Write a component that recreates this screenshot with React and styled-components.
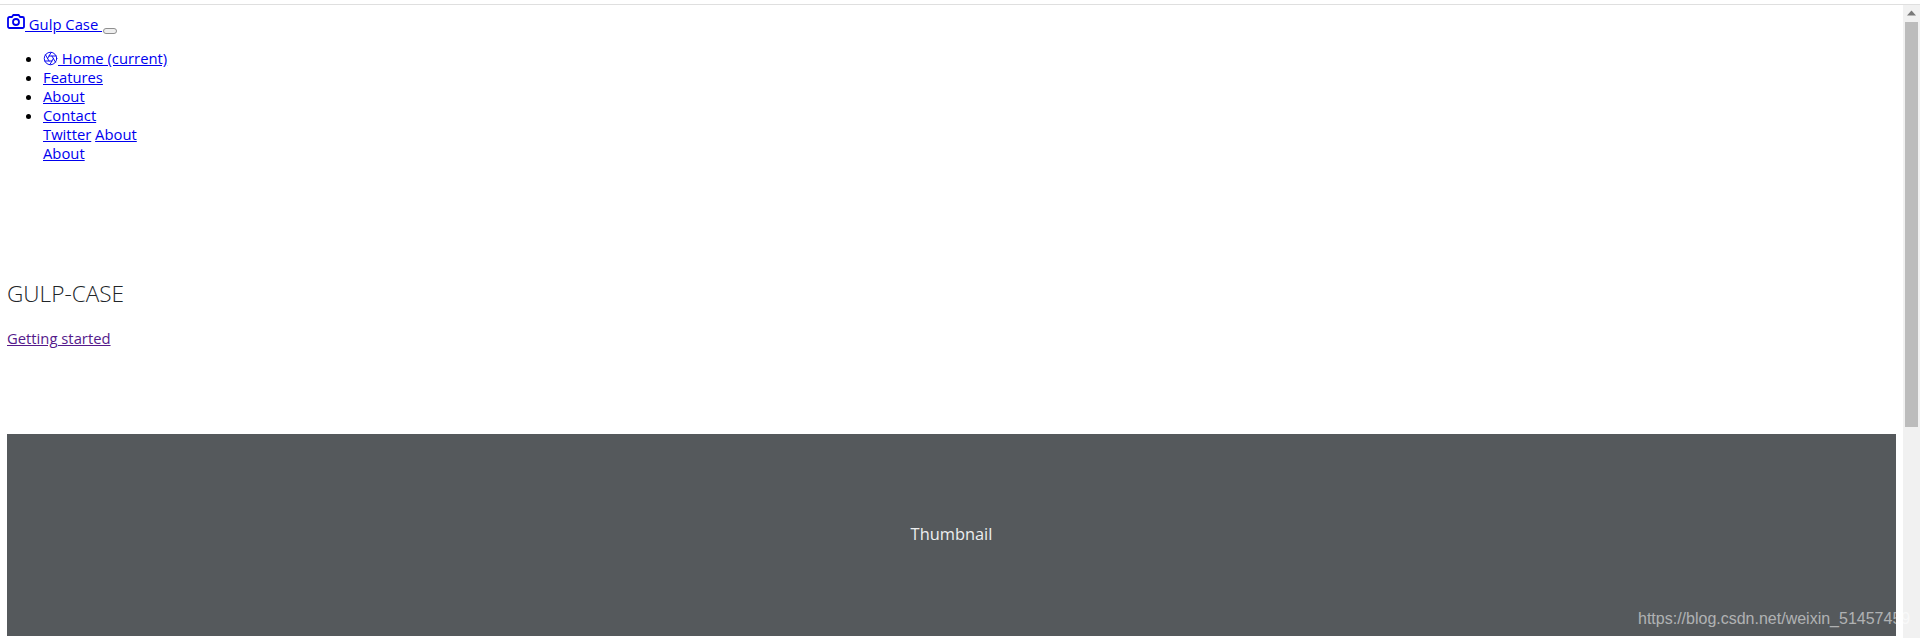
import React from "react";
import styled, { createGlobalStyle } from "styled-components";
import { Aperture } from "lucide-react";

const GlobalStyle = createGlobalStyle`
  html, body {
    margin: 0;
    height: 638px;
    overflow: hidden;
    background: #fff;
  }
  body {
    font-family: "Open Sans", "Noto Sans", sans-serif;
    font-size: 14.8px;
    line-height: 19px;
    color: #000;
  }
`;

const Frame = styled.div`
  display: flex;
  flex-direction: column;
  height: 638px;
  position: relative;
  overflow: hidden;
`;

const TopLine = styled.div`
  height: 4px;
  border-bottom: 1px solid #dfdfdf;
  flex: none;
`;

const Body = styled.div`
  display: flex;
  flex: 1;
  min-height: 0;
`;

const Content = styled.main`
  flex: 1;
  min-width: 0;
  padding: 7px 7px 0;
`;

const Link = styled.a`
  color: ${(p) => (p.$visited ? "#551a8b" : "#0000ee")};
  text-decoration: underline;
`;

const Brand = styled.div`
  display: flex;
  align-items: flex-start;
  height: 37px;
`;

const BrandIcon = styled.svg`
  width: 18px;
  height: 15px;
  flex: none;
  margin-top: 2px;
  fill: none;
  stroke: #0000ee;
  stroke-width: 1.8;
  stroke-linejoin: round;
`;

const BrandLink = styled(Link)`
  white-space: pre;
  margin-top: 3px;
  height: 19px;
`;

const Toggler = styled.button`
  width: 14px;
  height: 6px;
  margin: 16px 0 0 1px;
  padding: 0;
  border: 1px solid #8f8f8f;
  border-radius: 3px;
  background: #efefef;
`;

const NavList = styled.ul`
  margin: 0;
  padding: 0 0 0 36px;
  list-style: disc;
`;

const NavItem = styled.li`
  height: ${(p) => (p.$tall ? "57px" : "19px")};
`;

const HomeIcon = styled(Aperture)`
  vertical-align: -2px;
`;

const Line = styled.div`
  height: 19px;
`;

const Hero = styled.section`
  padding-top: 115px;
  height: 271px;
  box-sizing: border-box;
`;

const Title = styled.h1`
  margin: 0 0 19px;
  font-family: "Open Sans", sans-serif;
  font-size: 22.6px;
  line-height: 32px;
  font-weight: 300;
  color: #212529;
`;

const Thumbnail = styled.div`
  height: 202px;
  box-sizing: border-box;
  padding-bottom: 3px;
  width: 1889px;
  display: flex;
  align-items: center;
  justify-content: center;
  background: #55595c;
  color: #eceeef;
  font-size: 16.4px;
`;

const Track = styled.aside`
  width: 17px;
  flex: none;
  background: #f1f1f1;
  display: flex;
  flex-direction: column;
  align-items: center;
`;

const Arrow = styled.svg`
  width: 17px;
  height: 17px;
  flex: none;
  fill: #7a7a7a;
`;

const Thumb = styled.div`
  width: 13px;
  height: 405px;
  background: #bcbcbc;
`;

const Watermark = styled.div`
  position: absolute;
  left: 1638px;
  top: 609px;
  font-family: "Liberation Sans", Arial, sans-serif;
  font-size: 16px;
  line-height: 20px;
  color: rgba(255, 255, 255, 0.55);
  white-space: nowrap;
`;

export default function App() {
  return (
    <Frame>
      <GlobalStyle />
      <TopLine />
      <Body>
        <Content>
          <Brand>
            <BrandIcon viewBox="0 0 18 15">
              <path d="M1 4.5a1.5 1.5 0 0 1 1.5-1.5H5L6.2 1h5.6L13 3h2.5A1.5 1.5 0 0 1 17 4.5v8a1.5 1.5 0 0 1-1.5 1.5h-13A1.5 1.5 0 0 1 1 12.5z" />
              <circle cx="9" cy="8" r="3" />
            </BrandIcon>
            <BrandLink href="#">{" Gulp Case "}</BrandLink>
            <Toggler aria-label="Toggle navigation" />
          </Brand>
          <nav>
            <NavList>
              <NavItem>
                <Link href="#">
                  <HomeIcon size={15} strokeWidth={1.5} /> Home (current)
                </Link>
              </NavItem>
              <NavItem>
                <Link href="#">Features</Link>
              </NavItem>
              <NavItem>
                <Link href="#">About</Link>
              </NavItem>
              <NavItem $tall>
                <Line>
                  <Link href="#">Contact</Link>
                </Line>
                <Line>
                  <Link href="#">Twitter</Link> <Link href="#">About</Link>
                </Line>
                <Line>
                  <Link href="#">About</Link>
                </Line>
              </NavItem>
            </NavList>
          </nav>
          <Hero>
            <Title>GULP-CASE</Title>
            <Link href="#" $visited>
              Getting started
            </Link>
          </Hero>
          <Thumbnail>Thumbnail</Thumbnail>
        </Content>
        <Track>
          <Arrow viewBox="0 0 17 17">
            <path d="M8.5 5.5 L13 10.5 H4 Z" />
          </Arrow>
          <Thumb />
        </Track>
      </Body>
      <Watermark>https://blog.csdn.net/weixin_51457459</Watermark>
    </Frame>
  );
}
